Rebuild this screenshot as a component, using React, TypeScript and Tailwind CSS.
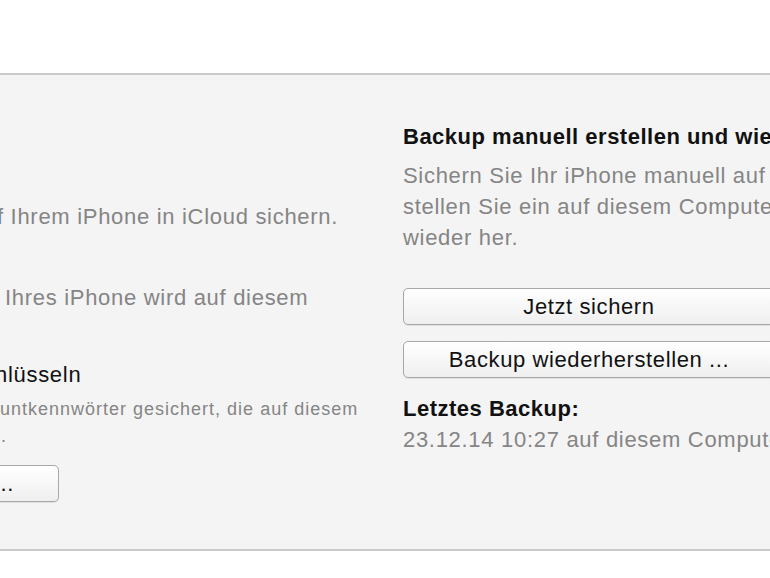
import React from "react";

function MacButton({ label, className }: { label: string; className: string }) {
  return (
    <button
      className={`flex items-center justify-center rounded-[5px] border border-[#a8a8a8] bg-gradient-to-b from-white to-[#efefef] text-[22px] leading-none tracking-[0.6px] text-[#111] shadow-[0_1px_0_rgba(0,0,0,0.08)] ${className}`}
    >
      {label}
    </button>
  );
}

export default function App() {
  return (
    <div className="h-[578px] w-[770px] overflow-hidden bg-white font-['Liberation_Sans',Arial,sans-serif]">
      <div className="mt-[73px] flex h-[478px] border-y-2 border-[#cbcbcb] bg-[#f4f4f4]">
        {/* left column, cropped by the viewport */}
        <div className="w-[403px] shrink-0 overflow-hidden">
          <p className="mt-[126px] ml-[-3px] whitespace-nowrap text-[22px] leading-[31px] tracking-[0.7px] text-[#858585]">
            f Ihrem iPhone in iCloud sichern.
          </p>
          <p className="mt-[50px] ml-[5px] whitespace-nowrap text-[22px] leading-[31px] tracking-[0.7px] text-[#858585]">
            Ihres iPhone wird auf diesem
          </p>
          <p className="mt-[46px] ml-[-5px] whitespace-nowrap text-[22px] leading-[31px] tracking-[0.7px] text-[#111]">
            hlüsseln
          </p>
          <p className="mt-[6px] whitespace-nowrap text-[18px] leading-[27px] tracking-[1px] text-[#858585]">
            untkennwörter gesichert, die auf diesem
          </p>
          <p className="ml-[1px] text-[18px] leading-[27px] text-[#858585]">.</p>
          <MacButton label="..." className="mt-[15px] ml-[-60px] h-[37px] w-[119px] !justify-end pr-[44px] text-[#7d8da8]" />
        </div>

        {/* right column */}
        <div className="flex min-w-0 flex-1 flex-col pt-[46px]">
          <h2 className="whitespace-nowrap text-[22px] font-bold leading-[31px] tracking-[0.5px] text-[#111]">
            Backup manuell erstellen und wiederherstellen
          </h2>
          <p className="mt-[8px] whitespace-nowrap text-[22px] leading-[31px] tracking-[0.7px] text-[#858585]">
            Sichern Sie Ihr iPhone manuell auf diesem Computer oder
            <br />
            stellen Sie ein auf diesem Computer gesichertes Backup
            <br />
            wieder her.
          </p>
          <MacButton label="Jetzt sichern" className="mt-[35px] h-[37px] w-[372px] shrink-0" />
          <MacButton label="Backup wiederherstellen ..." className="mt-[16px] h-[37px] w-[372px] shrink-0" />
          <p className="mt-[15px] whitespace-nowrap text-[22px] font-bold leading-[31px] tracking-[0.5px] text-[#111]">
            Letztes Backup:
          </p>
          <p className="whitespace-nowrap text-[22px] leading-[31px] tracking-[0.7px] text-[#858585]">
            23.12.14 10:27 auf diesem Computer
          </p>
        </div>
      </div>
    </div>
  );
}
